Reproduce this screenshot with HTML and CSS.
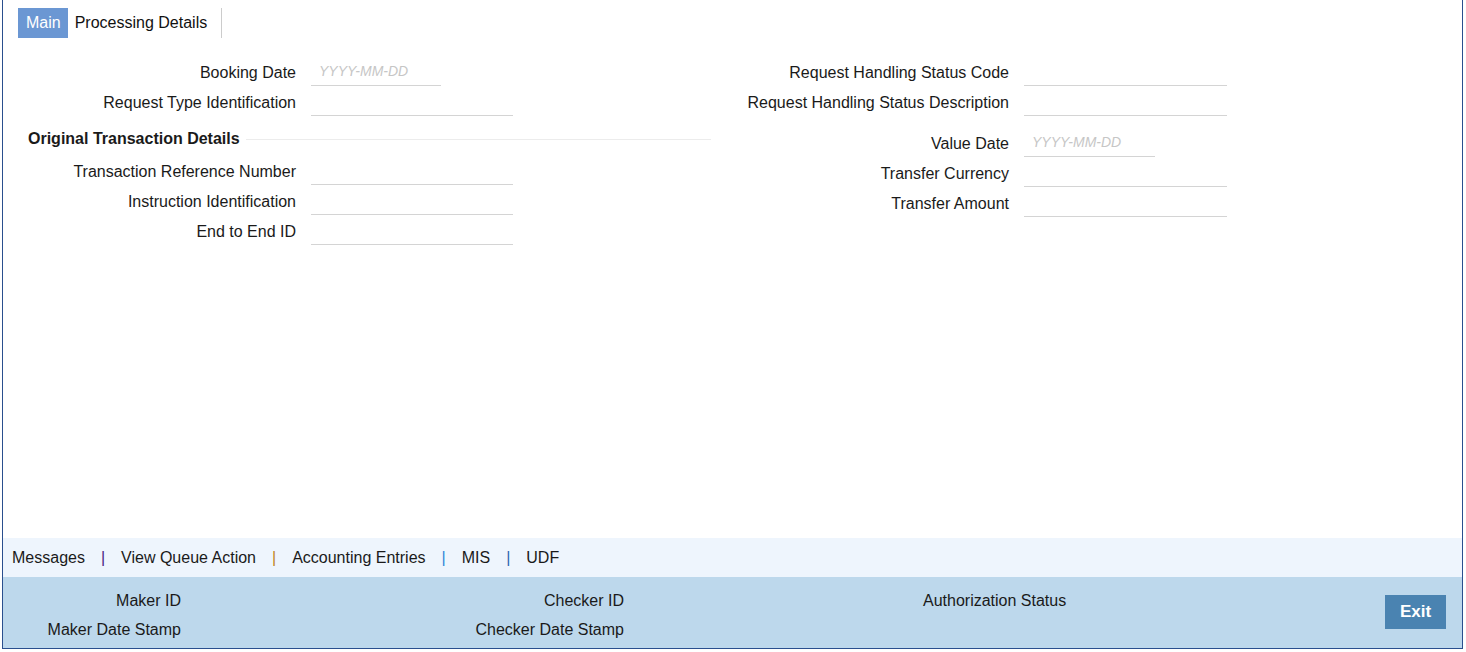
FILE: index.html
```html
<!DOCTYPE html>
<html>
<head>
<meta charset="utf-8">
<link rel="stylesheet" href="styles.css">
</head>
<body>
<div class="frame">
  <div class="content">
    <div class="tabs">
      <div class="tab active">Main</div>
      <div class="tab">Processing Details</div>
    </div>
    <div class="form">
      <div class="col col-left">
        <div class="row"><label>Booking Date</label><input class="inp date" placeholder="YYYY-MM-DD"></div>
        <div class="row"><label>Request Type Identification</label><input class="inp"></div>
        <div class="section"><span class="section-title">Original Transaction Details</span><span class="section-line"></span></div>
        <div class="row"><label>Transaction Reference Number</label><input class="inp"></div>
        <div class="row"><label>Instruction Identification</label><input class="inp"></div>
        <div class="row"><label>End to End ID</label><input class="inp"></div>
      </div>
      <div class="col col-right">
        <div class="row"><label>Request Handling Status Code</label><input class="inp"></div>
        <div class="row"><label>Request Handling Status Description</label><input class="inp"></div>
        <div class="row spaced"><label>Value Date</label><input class="inp date" placeholder="YYYY-MM-DD"></div>
        <div class="row"><label>Transfer Currency</label><input class="inp"></div>
        <div class="row"><label>Transfer Amount</label><input class="inp"></div>
      </div>
    </div>
  </div>
  <div class="links">
    <span class="link">Messages</span><span class="sep sep1">|</span><span class="link">View Queue Action</span><span class="sep sep2">|</span><span class="link">Accounting Entries</span><span class="sep sep3">|</span><span class="link">MIS</span><span class="sep sep4">|</span><span class="link">UDF</span>
  </div>
  <div class="audit">
    <div class="audit-col c1"><div>Maker ID</div><div>Maker Date Stamp</div></div>
    <div class="audit-col c2"><div>Checker ID</div><div>Checker Date Stamp</div></div>
    <div class="audit-col c3"><div>Authorization Status</div></div>
    <button class="exit">Exit</button>
  </div>
</div>
</body>
</html>
```
FILE: styles.css
```css
html, body {
  margin: 0;
  padding: 0;
  background: #ffffff;
}
body {
  font-family: "Liberation Sans", Arial, sans-serif;
  font-size: 16px;
  color: #1a1a1a;
}
.frame {
  margin-left: 2px;
  width: 1459px;
  height: 648px;
  border-left: 1px solid #2a4f8e;
  border-right: 1px solid #2a4f8e;
  border-bottom: 1px solid #2a4f8e;
  display: flex;
  flex-direction: column;
}
.content {
  height: 538px;
}
.tabs {
  display: flex;
  padding: 8px 0 0 15px;
  height: 30px;
}
.tab {
  height: 30px;
  line-height: 30px;
  padding: 0 14px 0 7px;
  border-right: 1px solid #cccccc;
  color: #111;
}
.tab.active {
  background: #6b97d3;
  color: #ffffff;
  border-right: none;
  padding: 0 7px 0 8px;
}
.form {
  display: grid;
  grid-template-columns: 708px 1fr;
  margin-top: 19px;
}
.col {
  display: flex;
  flex-direction: column;
}
.row {
  display: grid;
  height: 30px;
  column-gap: 15px;
  align-items: start;
}
.col-left .row {
  grid-template-columns: 293px 202px;
}
.col-right .row {
  grid-template-columns: 298px 203px;
}
.row label {
  text-align: right;
  line-height: 30px;
  padding-top: 1px;
  white-space: nowrap;
}
.inp {
  box-sizing: border-box;
  height: 29px;
  border: none;
  border-bottom: 1px solid #d4d4d4;
  background: transparent;
  padding: 0 8px;
  margin: 0;
  font-family: "Liberation Sans", Arial, sans-serif;
  font-size: 14px;
  outline: none;
}
.inp.date {
  width: 130px;
}
.col-right .inp.date {
  width: 131px;
}
.inp::placeholder {
  color: #c6c6c6;
  font-style: italic;
}
.section {
  display: flex;
  align-items: center;
  height: 20px;
  margin: 12px 0 7px 0;
  padding-left: 25px;
}
.section-title {
  font-weight: bold;
  white-space: nowrap;
}
.section-line {
  flex: 1;
  height: 1px;
  background: #ececec;
  margin-left: 6px;
}
.row.spaced {
  margin-top: 11px;
}
.links {
  height: 39px;
  line-height: 39px;
  background: #eef5fd;
  padding-left: 9px;
  white-space: nowrap;
}
.sep {
  padding: 0 16px;
}
.sep1 { color: #4a1f80; }
.sep2 { color: #c08418; }
.sep3 { color: #2d86d8; }
.sep4 { color: #2b64b0; }
.audit {
  flex: 1;
  background: #bdd8ec;
  display: flex;
  align-items: flex-start;
  padding-top: 9px;
  box-sizing: border-box;
}
.audit-col div {
  line-height: 29px;
  white-space: nowrap;
}
.c1 {
  width: 178px;
  text-align: right;
}
.c2 {
  width: 443px;
  text-align: right;
}
.c3 {
  margin-left: 299px;
}
.exit {
  margin-left: auto;
  margin-right: 16px;
  margin-top: 9px;
  width: 61px;
  height: 34px;
  border: none;
  background: #4a83b1;
  color: #ffffff;
  font-family: "Liberation Sans", Arial, sans-serif;
  font-weight: bold;
  font-size: 17px;
  padding: 0;
}
```
